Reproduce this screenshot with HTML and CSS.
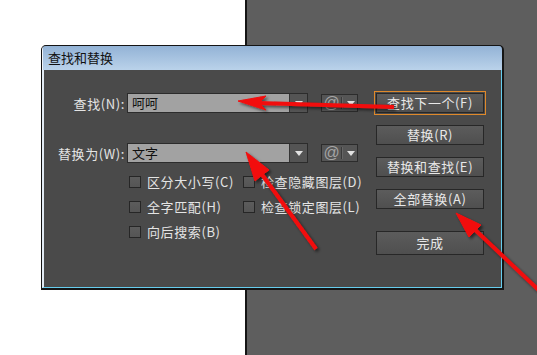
FILE: index.html
```html
<!DOCTYPE html>
<html lang="zh-CN">
<head>
  <meta charset="UTF-8">
  <title>查找和替换</title>
  <link rel="stylesheet" href="styles.css">
</head>
<body>
  <div class="desktop">
    <div class="dialog">
      <div class="titlebar">查找和替换</div>
      <div class="content">
        <div class="form">
          <div class="row">
            <label class="label">查找(N):</label>
            <div class="combo">
              <span class="value">呵呵</span>
              <span class="drop"><i class="tri"></i></span>
            </div>
            <div class="at"><span class="at-sign">@</span><span class="sep"></span><i class="tri"></i></div>
          </div>
          <div class="row second">
            <label class="label">替换为(W):</label>
            <div class="combo">
              <span class="value">文字</span>
              <span class="drop"><i class="tri"></i></span>
            </div>
            <div class="at"><span class="at-sign">@</span><span class="sep"></span><i class="tri"></i></div>
          </div>
          <div class="checks">
            <div class="check"><span class="box"></span>区分大小写(C)</div>
            <div class="check"><span class="box"></span>检查隐藏图层(D)</div>
            <div class="check"><span class="box"></span>全字匹配(H)</div>
            <div class="check"><span class="box"></span>检查锁定图层(L)</div>
            <div class="check"><span class="box"></span>向后搜索(B)</div>
          </div>
        </div>
        <div class="buttons">
          <button class="btn focus">查找下一个(F)</button>
          <button class="btn">替换(R)</button>
          <button class="btn">替换和查找(E)</button>
          <button class="btn">全部替换(A)</button>
          <button class="btn done">完成</button>
        </div>
      </div>
    </div>

    <!-- 注释用的红色箭头 -->
    <svg class="arrows" width="537" height="355" viewBox="0 0 537 355">
      <defs>
        <filter id="shadow" x="-20%" y="-20%" width="140%" height="140%">
          <feDropShadow dx="2" dy="2" stdDeviation="1.5" flood-color="#000" flood-opacity="0.55"/>
        </filter>
      </defs>
      <g fill="#f20d0d" stroke="#f20d0d" filter="url(#shadow)">
        <line x1="394" y1="107" x2="258" y2="103" stroke-width="4"/>
        <polygon points="238,101 266,96 259,103 266,110" stroke-width="1"/>
        <line x1="316" y1="249" x2="258" y2="169" stroke-width="4"/>
        <polygon points="246,152 269,170 262,175 255,181" stroke-width="1"/>
        <line x1="545" y1="296" x2="470" y2="225" stroke-width="4"/>
        <polygon points="456,213 481,225 475,231 469,237" stroke-width="1"/>
      </g>
    </svg>
  </div>
</body>
</html>
```

FILE: styles.css
```css
body { margin: 0; font-family: "Noto Sans CJK SC", "Liberation Sans", sans-serif; }

.desktop {
  position: relative;
  width: 537px;
  height: 355px;
  overflow: hidden;
  box-sizing: border-box;
  padding: 45px 0 0 41px;
  background: linear-gradient(to right, #fff 0 245px, #151515 245px 247px, #5e5e5e 247px);
}

.dialog {
  width: 463px;
  height: 245px;
  box-sizing: border-box;
  border: 1px solid #151515;
  border-right-width: 2px;
  border-bottom-width: 2px;
  border-radius: 5px 5px 0 0;
  background: #4a4a4a;
  display: flex;
  flex-direction: column;
  overflow: hidden;
}

.titlebar {
  height: 24px;
  line-height: 24px;
  padding-left: 5px;
  font-size: 13px;
  color: #111;
  border-left: 1px solid #eef4fa;
  background: linear-gradient(#93b3d6, #bad2ea);
}

.content {
  flex: 1;
  display: flex;
  padding-top: 23px;
  border-left: 2px solid #e2ebf4;
  border-right: 1px solid #66cdee;
  border-bottom: 1px solid #66cdee;
}

.form { width: 314px; }

.row {
  display: flex;
  align-items: center;
  height: 20px;
}
.row.second { margin-top: 30px; }

.label {
  width: 83px;
  box-sizing: border-box;
  padding-right: 2px;
  text-align: right;
  font-size: 13px;
  letter-spacing: 0.6px;
  color: #e4e4e4;
}

.combo {
  width: 181px;
  height: 20px;
  box-sizing: border-box;
  display: flex;
  border: 1px solid #2c2c2c;
  background: #a2a2a2;
}
.combo .value {
  flex: 1;
  padding-left: 4px;
  font-size: 13px;
  line-height: 18px;
  color: #111;
}
.combo .drop {
  width: 17px;
  display: flex;
  align-items: center;
  justify-content: center;
  border-left: 1px solid #353535;
  background: #545454;
}

.tri {
  width: 0;
  height: 0;
  border-left: 4px solid transparent;
  border-right: 4px solid transparent;
  border-top: 5px solid #e2e2e2;
}

.at {
  margin-left: 13px;
  width: 37px;
  height: 18px;
  box-sizing: border-box;
  display: flex;
  align-items: center;
  border: 1px solid #2c2c2c;
  background: #555;
}
.at-sign {
  width: 19px;
  text-align: center;
  font-family: "Liberation Sans", sans-serif;
  font-size: 16px;
  line-height: 16px;
  color: #a4a4a4;
}
.at .sep {
  width: 1px;
  height: 12px;
  background: #3a3a3a;
  border-right: 1px solid #666;
  margin-right: 4px;
}

.checks {
  margin: 6px 0 0 85px;
  display: grid;
  grid-template-columns: 114px auto;
  grid-auto-rows: 25px;
}
.check {
  display: flex;
  align-items: center;
  font-size: 13px;
  letter-spacing: 0.6px;
  color: #e4e4e4;
  white-space: nowrap;
}
.box {
  width: 12px;
  height: 12px;
  box-sizing: border-box;
  margin-right: 6px;
  border: 1px solid #262626;
  background: linear-gradient(#5c5c5c, #555);
}

.buttons {
  margin-left: 18px;
  display: flex;
  flex-direction: column;
  gap: 12px;
}
.btn {
  width: 108px;
  height: 20px;
  padding: 0;
  box-sizing: border-box;
  border: 1px solid #272727;
  background: linear-gradient(#5c5c5c, #4f4f4f);
  color: #e8e8e8;
  font-family: inherit;
  font-size: 13px;
  letter-spacing: 0.6px;
  line-height: 18px;
}
.btn.focus { outline: 1px solid #e0892a; outline-offset: 1px; }
.btn.done { margin-top: 10px; height: 24px; }

.arrows {
  position: absolute;
  left: 0;
  top: 0;
}
```
